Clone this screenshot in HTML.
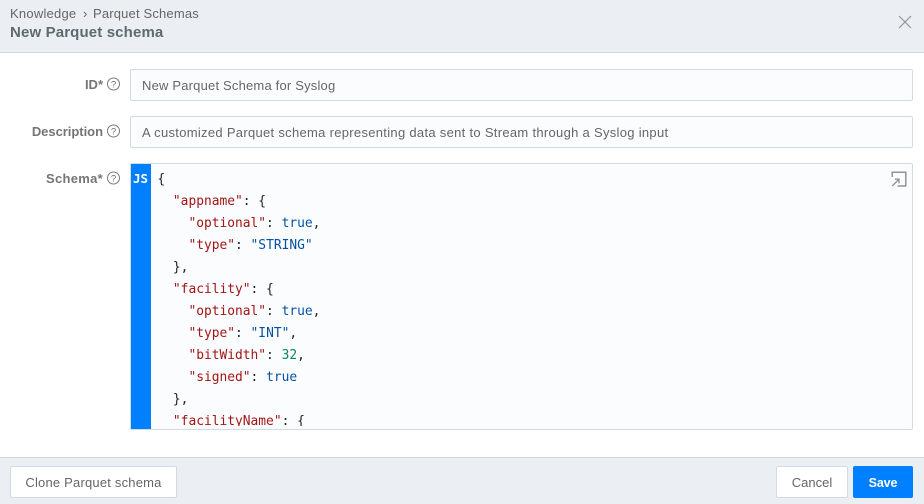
<!DOCTYPE html>
<html><head><meta charset="utf-8"><style>
html,body{margin:0;padding:0;background:#fff}
body{width:924px;height:504px;position:relative;overflow:hidden;font-family:"Liberation Sans",Arial,sans-serif;color:#666}
.a{position:absolute;white-space:pre}
.hdr{left:0;top:0;width:924px;height:52px;background:#ebeff3;border-bottom:1px solid #d3d8dc}
.ftr{left:0;top:457px;width:924px;height:47px;background:#ebeff3;border-top:1px solid #d3d8dc;box-sizing:border-box}
.lbl{font-weight:bold;font-size:13px;color:#757575;text-align:right;right:821px;line-height:18px}
.inp{left:130px;width:783px;height:32px;box-sizing:border-box;background:#fbfcfe;border:1px solid #d0dbe3;border-radius:2px}
.t{font-size:13px;color:#666;line-height:18px}
.btn{box-sizing:border-box;height:32px;top:466px;background:#fff;border:1px solid #d0dbe3;border-radius:2px;font-size:13px;color:#666;text-align:center;line-height:32px}
.code{font-family:"DejaVu Sans Mono","Liberation Mono",monospace;font-size:12.9px;line-height:22px;color:#222}
.k{color:#a31515}.b{color:#0451a5}.n{color:#098658}
svg{position:absolute;overflow:visible}
</style></head><body>
<div class="a hdr"></div>
<div class="a t" style="left:10px;top:5px;letter-spacing:.23px">Knowledge</div>
<div class="a t" style="left:83px;top:5px">›</div>
<div class="a t" style="left:93px;top:5px;letter-spacing:.17px">Parquet Schemas</div>
<div class="a" style="left:10px;top:24px;font-size:15px;font-weight:bold;color:#5f6a70;line-height:18px;letter-spacing:.14px">New Parquet schema</div>
<svg style="left:899px;top:16px" width="12" height="12" viewBox="0 0 12 12"><path d="M0 0L12 12M12 0L0 12" stroke="#8f979c" stroke-width="1.2" fill="none"/></svg>

<div class="a lbl" style="top:76px">ID*</div>
<div class="a lbl" style="top:123px;letter-spacing:-.03px">Description</div>
<div class="a lbl" style="top:170px;letter-spacing:.3px">Schema*</div>
<svg style="left:107px;top:77px" width="13" height="13" viewBox="0 0 13 13"><circle cx="6.5" cy="7" r="6" fill="none" stroke="#7a7a7a"/><text x="6.5" y="10.3" font-size="9.5" font-family="Liberation Sans" text-anchor="middle" fill="#6f6f6f">?</text></svg>
<svg style="left:107px;top:124px" width="13" height="13" viewBox="0 0 13 13"><circle cx="6.5" cy="7" r="6" fill="none" stroke="#7a7a7a"/><text x="6.5" y="10.3" font-size="9.5" font-family="Liberation Sans" text-anchor="middle" fill="#6f6f6f">?</text></svg>
<svg style="left:107px;top:171px" width="13" height="13" viewBox="0 0 13 13"><circle cx="6.5" cy="7" r="6" fill="none" stroke="#7a7a7a"/><text x="6.5" y="10.3" font-size="9.5" font-family="Liberation Sans" text-anchor="middle" fill="#6f6f6f">?</text></svg>

<div class="a inp" style="top:69px"></div>
<div class="a t" style="left:142px;top:77px;letter-spacing:.19px">New Parquet Schema for Syslog</div>
<div class="a inp" style="top:116px"></div>
<div class="a t" style="left:142px;top:124px;letter-spacing:.3px">A customized Parquet schema representing data sent to Stream through a Syslog input</div>

<div class="a inp" style="top:163px;height:267px"></div>
<div class="a" style="left:131px;top:164px;width:20px;height:265px;background:#0080ff"></div>
<div class="a" style="left:133px;top:170px;font-family:'DejaVu Sans Mono',monospace;font-weight:bold;font-size:12.5px;line-height:18px;color:#fff">JS</div>
<div class="a" style="left:151px;top:164px;width:761px;height:262px;overflow:hidden">
<div class="a code" style="left:6.4px;top:5px">{
  <span class="k">"appname"</span>: {
    <span class="k">"optional"</span>: <span class="b">true</span>,
    <span class="k">"type"</span>: <span class="b">"STRING"</span>
  },
  <span class="k">"facility"</span>: {
    <span class="k">"optional"</span>: <span class="b">true</span>,
    <span class="k">"type"</span>: <span class="b">"INT"</span>,
    <span class="k">"bitWidth"</span>: <span class="n">32</span>,
    <span class="k">"signed"</span>: <span class="b">true</span>
  },
  <span class="k">"facilityName"</span>: {</div></div>
<svg style="left:891px;top:171px" width="16" height="16" viewBox="0 0 16 16"><path d="M1.2 6V1.2H14.8V15H6.5" fill="none" stroke="#949494" stroke-width="1.5"/><path d="M1.2 15L7.5 8.7M3.8 8.2H8V12.4" fill="none" stroke="#949494" stroke-width="1.4"/></svg>

<div class="a ftr"></div>
<div class="a btn" style="left:10px;width:167px;letter-spacing:.2px">Clone Parquet schema</div>
<div class="a btn" style="left:776px;width:72px">Cancel</div>
<div class="a btn" style="left:853px;width:60px;background:#0080ff;border-color:#0080ff;color:#fff;font-weight:bold;font-size:12.5px;letter-spacing:-.1px">Save</div>
</body></html>
